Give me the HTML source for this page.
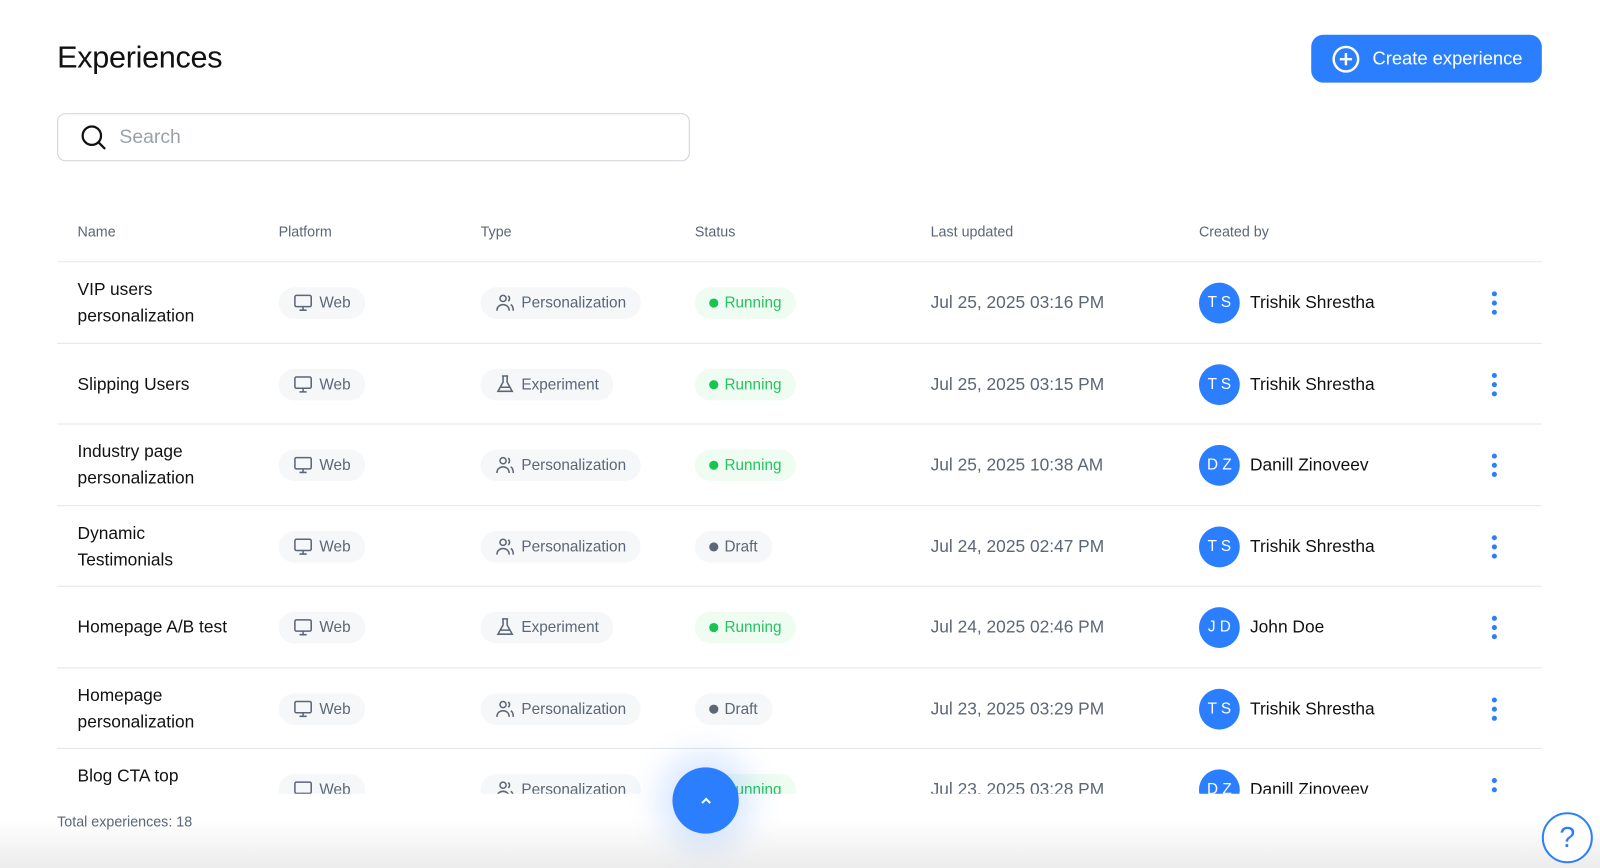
<!DOCTYPE html>
<html><head><meta charset="utf-8"><style>
*{box-sizing:border-box;margin:0;padding:0}
body{width:1600px;height:868px;overflow:hidden;background:#fff;font-family:"Liberation Sans",sans-serif;color:#111}
#w{position:absolute;left:0;top:0;width:1568px;height:851px;transform:scale(1.0204);transform-origin:0 0}
h1{position:absolute;left:56px;top:40px;font-size:30px;font-weight:400;color:#111;letter-spacing:-.3px}
.btn{position:absolute;left:1285px;top:34px;width:226px;height:47px;background:#2b7fff;border-radius:12px;color:#fff;font-size:18px;display:flex;align-items:center;padding-left:20px;gap:12px}
.search{position:absolute;left:56px;top:111px;width:620px;height:47px;border:1px solid #cfd3d9;border-radius:8px;display:flex;align-items:center;padding-left:22px;gap:12px;color:#9aa1ab;font-size:19px}
.hdr{position:absolute;top:219px;font-size:14px;color:#5b6677}
.clip{position:absolute;left:0;top:256px;width:1568px;height:522px;overflow:hidden}
.row{position:absolute;left:56px;width:1455px;height:80px;border-top:1px solid #e3e5e8}
.row>*{position:absolute;top:50%;transform:translateY(-50%)}
.nm{left:20px;font-size:17px;line-height:26px;color:#111;width:150px}
.pill{height:31px;border-radius:16px;background:#f5f7f9;display:flex;align-items:center;gap:6px;padding:0 14px;font-size:15px;color:#5b6677}
.st{background:#effcf2;color:#22c55e}
.st.d{background:#f5f7f9;color:#5b6677}
.dot{width:9px;height:9px;border-radius:50%;background:#16c452}
.d .dot{background:#5b6677}
.dt{left:856px;font-size:17px;color:#5b6677}
.av{left:1119px;width:40px;height:40px;border-radius:50%;background:#2b7fff;color:#fff;font-size:15px;display:flex;align-items:center;justify-content:center;letter-spacing:0}
.who{left:1169px;font-size:17px;color:#111}
.more{left:1406px;width:4px;display:flex;flex-direction:column;gap:4px}
.more i{width:5px;height:5px;border-radius:50%;background:#2b7fff;display:block}
.fade{position:absolute;left:0;top:778px;width:1568px;height:73px;background:linear-gradient(#fff 0%,#fff 35%,#ececec 100%)}
.tot{position:absolute;left:56px;top:797px;font-size:14px;color:#5b6677}
.up{position:absolute;left:659px;top:752px;width:65px;height:65px;border-radius:50%;background:#2b7fff;box-shadow:0 0 30px 14px rgba(43,127,255,.18);color:#fff;display:flex;align-items:center;justify-content:center}
.help{position:absolute;left:1511px;top:796px;width:50px;height:50px;border:2px solid #2b7fff;border-radius:50%;color:#2b7fff;font-size:28px;display:flex;align-items:center;justify-content:center;background:#fff}
</style></head><body><div id="w">
<h1>Experiences</h1>
<div class="btn"><svg width="28" height="28" viewBox="0 0 28 28" fill="none" stroke="#fff" stroke-width="2.4"><circle cx="14" cy="14" r="12"/><path d="M14 8v12M8 14h12"/></svg>Create experience</div>
<div class="search"><svg width="26" height="26" viewBox="0 0 26 26" fill="none" stroke="#111" stroke-width="2.2"><circle cx="11" cy="11" r="9"/><path d="M18 18l6 6"/></svg>Search</div>
<div class="hdr" style="left:76px">Name</div><div class="hdr" style="left:273px">Platform</div><div class="hdr" style="left:471px">Type</div><div class="hdr" style="left:681px">Status</div><div class="hdr" style="left:912px">Last updated</div><div class="hdr" style="left:1175px">Created by</div>
<div class="clip">
<svg width="0" height="0" style="position:absolute"><defs>
<symbol id="mon" viewBox="0 0 20 20"><g fill="none" stroke="#5b6677" stroke-width="1.5"><rect x="2" y="3" width="16" height="11" rx="1.5"/><path d="M10 14v3M6.5 17.5h7"/></g></symbol>
<symbol id="ppl" viewBox="0 0 20 20"><g fill="none" stroke="#5b6677" stroke-width="1.5"><circle cx="8" cy="6" r="3"/><path d="M2 18c0-4 3-6 6-6s6 2 6 6M13 3.5a3 3 0 010 5M15.5 12c1.5.8 2.5 2.5 2.5 6"/></g></symbol>
<symbol id="fl" viewBox="0 0 20 20"><g fill="none" stroke="#5b6677" stroke-width="1.5"><path d="M7 2h6M8 2v6l-5 9h14l-5-9V2M5 13h10"/></g></symbol>
</defs></svg>
</div>
<div class="fade"></div>
<div class="tot">Total experiences: 18</div>
<div class="up"><svg width="14" height="10" viewBox="0 0 14 10" fill="none" stroke="#fff" stroke-width="2"><path d="M3 7l4-4 4 4"/></svg></div>
<div class="help">?</div>
</div>
<script>
const rows=[["VIP users personalization",1,1,"Jul 25, 2025 03:16 PM","TS","Trishik Shrestha"],["Slipping Users",0,1,"Jul 25, 2025 03:15 PM","TS","Trishik Shrestha"],["Industry page personalization",1,1,"Jul 25, 2025 10:38 AM","DZ","Danill Zinoveev"],["Dynamic Testimonials",1,0,"Jul 24, 2025 02:47 PM","TS","Trishik Shrestha"],["Homepage A/B test",0,1,"Jul 24, 2025 02:46 PM","JD","John Doe"],["Homepage personalization",1,0,"Jul 23, 2025 03:29 PM","TS","Trishik Shrestha"],["Blog CTA top banner",1,1,"Jul 23, 2025 03:28 PM","DZ","Danill Zinoveev"]];
const c=document.querySelector('.clip');let h='';
rows.forEach((r,i)=>{const t=Math.round(i*79.5);
h+=`<div class="row" style="top:${t}px"><div class="nm">${r[0]}</div>
<div class="pill" style="left:217px"><svg width="20" height="20"><use href="#mon"/></svg>Web</div>
<div class="pill" style="left:415px"><svg width="20" height="20"><use href="#${r[1]?'ppl':'fl'}"/></svg>${r[1]?'Personalization':'Experiment'}</div>
<div class="pill st ${r[2]?'':'d'}" style="left:625px"><span class="dot"></span>${r[2]?'Running':'Draft'}</div>
<div class="dt">${r[3]}</div><div class="av">${r[4][0]} ${r[4][1]}</div><div class="who">${r[5]}</div>
<div class="more"><i></i><i></i><i></i></div></div>`});
c.insertAdjacentHTML('beforeend',h);
</script>
</body></html>
